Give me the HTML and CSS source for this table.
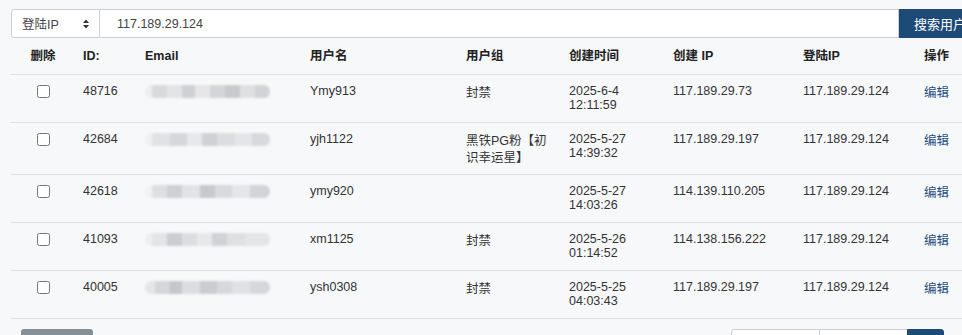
FILE: index.html
```html
<!DOCTYPE html>
<html lang="zh">
<head>
<meta charset="utf-8">
<title>用户搜索</title>
<link rel="stylesheet" href="styles.css">
</head>
<body>
<div class="page">
  <form class="search">
    <div class="select">
      <span>登陆IP</span>
      <svg class="arrows" width="8" height="12" viewBox="0 0 8 12"><path d="M4 1.5 L7 5 H1 Z M4 10.5 L7 7 H1 Z" fill="#333"/></svg>
    </div>
    <div class="input">117.189.29.124</div>
    <button type="button" class="btn-search">搜索用户</button>
  </form>

  <table class="users">
    <colgroup>
      <col style="width:64px"><col style="width:62px"><col style="width:165px"><col style="width:156px"><col style="width:103px"><col style="width:104px"><col style="width:130px"><col style="width:121px"><col style="width:65px">
    </colgroup>
    <thead>
      <tr>
        <th class="c">删除</th><th>ID:</th><th>Email</th><th>用户名</th><th>用户组</th><th>创建时间</th><th>创建 IP</th><th>登陆IP</th><th>操作</th>
      </tr>
    </thead>
    <tbody>
      <tr>
        <td class="c"><input type="checkbox"></td><td>48716</td><td><span class="blur b1"></span></td><td>Ymy913</td><td class="grp">封禁</td><td>2025-6-4<br>12:11:59</td><td>117.189.29.73</td><td>117.189.29.124</td><td><a class="edit" href="#">编辑</a></td>
      </tr>
      <tr>
        <td class="c"><input type="checkbox"></td><td>42684</td><td><span class="blur b2"></span></td><td>yjh1122</td><td class="grp">黑铁PG粉【初识幸运星】</td><td>2025-5-27<br>14:39:32</td><td>117.189.29.197</td><td>117.189.29.124</td><td><a class="edit" href="#">编辑</a></td>
      </tr>
      <tr>
        <td class="c"><input type="checkbox"></td><td>42618</td><td><span class="blur b3"></span></td><td>ymy920</td><td class="grp"></td><td>2025-5-27<br>14:03:26</td><td>114.139.110.205</td><td>117.189.29.124</td><td><a class="edit" href="#">编辑</a></td>
      </tr>
      <tr>
        <td class="c"><input type="checkbox"></td><td>41093</td><td><span class="blur b4"></span></td><td>xm1125</td><td class="grp">封禁</td><td>2025-5-26<br>01:14:52</td><td>114.138.156.222</td><td>117.189.29.124</td><td><a class="edit" href="#">编辑</a></td>
      </tr>
      <tr>
        <td class="c"><input type="checkbox"></td><td>40005</td><td><span class="blur b5"></span></td><td>ysh0308</td><td class="grp">封禁</td><td>2025-5-25<br>04:03:43</td><td>117.189.29.197</td><td>117.189.29.124</td><td><a class="edit" href="#">编辑</a></td>
      </tr>
    </tbody>
  </table>

  <div class="footer">
    <button type="button" class="btn-del"></button>
    <div class="pager">
      <span class="pg"></span><span class="pg"></span><span class="pg active"></span>
    </div>
  </div>
</div>
</body>
</html>
```
FILE: styles.css
```css
html, body {
  margin: 0;
  padding: 0;
  background: #f7f8fa;
  overflow: hidden;
}
body {
  font-family: "Liberation Sans", Arial, "Noto Sans CJK SC", sans-serif;
  font-size: 12.5px;
  color: #333;
}
.page {
  width: 970px;
  padding: 9px 0 0 11px;
}
.search {
  display: flex;
  height: 29px;
  margin: 0;
}
.select {
  width: 89px;
  box-sizing: border-box;
  border: 1px solid #ccd0d5;
  border-radius: 3px 0 0 3px;
  background: #fff;
  display: flex;
  align-items: center;
  justify-content: space-between;
  padding: 0 9px 0 10px;
  color: #444;
}
.arrows { display: block; }
.input {
  flex: 1;
  box-sizing: border-box;
  border: 1px solid #ccd0d5;
  border-left: none;
  background: #fff;
  display: flex;
  align-items: center;
  padding-left: 17px;
  color: #444;
}
.btn-search {
  width: 82px;
  border: none;
  background: #1e4a78;
  color: #fff;
  font: inherit;
  font-size: 13px;
  text-align: left;
  padding: 0 0 0 15px;
}
.users {
  border-collapse: collapse;
  table-layout: fixed;
  width: 970px;
}
.users th {
  text-align: left;
  font-weight: bold;
  color: #222;
  padding: 11px 8px;
  line-height: 14px;
  border-bottom: 1px solid #dcdfe3;
}
.users td {
  padding: 9px 8px 10px;
  vertical-align: top;
  line-height: 14px;
  border-bottom: 1px solid #dcdfe3;
}
.users td.grp {
  line-height: 17px;
  padding-top: 10px;
  padding-bottom: 7px;
}
.users .c { text-align: center; }
.users input[type=checkbox] {
  margin: 1px 0 0 0;
  width: 13px;
  height: 13px;
  vertical-align: top;
}
.edit {
  color: #1f4f82;
  text-decoration: none;
  display: inline-block;
  margin-top: 2px;
}
.blur {
  display: block;
  width: 125px;
  height: 13px;
  margin-top: 1px;
  filter: blur(1px);
  border-radius: 6px;
}
.b1 { background: linear-gradient(90deg, #eee 0 6%, #d9dadc 6% 18%, #e3e4e6 18% 30%, #cfd0d3 30% 40%, #e6e6e8 40% 52%, #d4d5d8 52% 64%, #c9cacd 64% 76%, #dfe0e2 76% 88%, #d2d3d6 88% 100%); }
.b2 { background: linear-gradient(90deg, #f0f0f0 0 6%, #e1e2e4 6% 20%, #d6d7da 20% 34%, #e8e8ea 34% 46%, #d0d1d4 46% 58%, #dcdde0 58% 72%, #e4e5e7 72% 86%, #d8d9dc 86% 100%); }
.b3 { background: linear-gradient(90deg, #f2f2f2 0 6%, #dedfe1 6% 18%, #cfd0d3 18% 30%, #e2e3e5 30% 44%, #c8c9cc 44% 56%, #d9dadd 56% 70%, #e6e6e8 70% 84%, #d3d4d7 84% 100%); }
.b4 { background: linear-gradient(90deg, #eee 0 6%, #e3e4e6 6% 18%, #cccdd0 18% 30%, #dcdde0 30% 42%, #e8e8ea 42% 54%, #d1d2d5 54% 66%, #dfe0e2 66% 80%, #e5e5e7 80% 100%); }
.b5 { background: linear-gradient(90deg, #e6e6e6 0 8%, #d5d6d9 8% 20%, #c6c7ca 20% 30%, #dcdde0 30% 44%, #cbccd0 44% 58%, #d7d8db 58% 70%, #e0e1e3 70% 84%, #d6d7da 84% 100%); }
.footer {
  display: flex;
  justify-content: space-between;
  align-items: flex-start;
  margin-top: 10px;
  padding: 0 37px 0 10px;
}
.btn-del {
  width: 72px;
  height: 30px;
  border: none;
  border-radius: 3px;
  background: #868e96;
}
.pager {
  display: flex;
}
.pg {
  width: 89px;
  height: 30px;
  box-sizing: border-box;
  background: #fff;
  border: 1px solid #ccd0d5;
  margin-left: -1px;
}
.pg:first-child { border-radius: 3px 0 0 3px; }
.pg.active {
  width: 37px;
  background: #1e4a78;
  border-color: #1e4a78;
  border-radius: 0 3px 3px 0;
}
```
